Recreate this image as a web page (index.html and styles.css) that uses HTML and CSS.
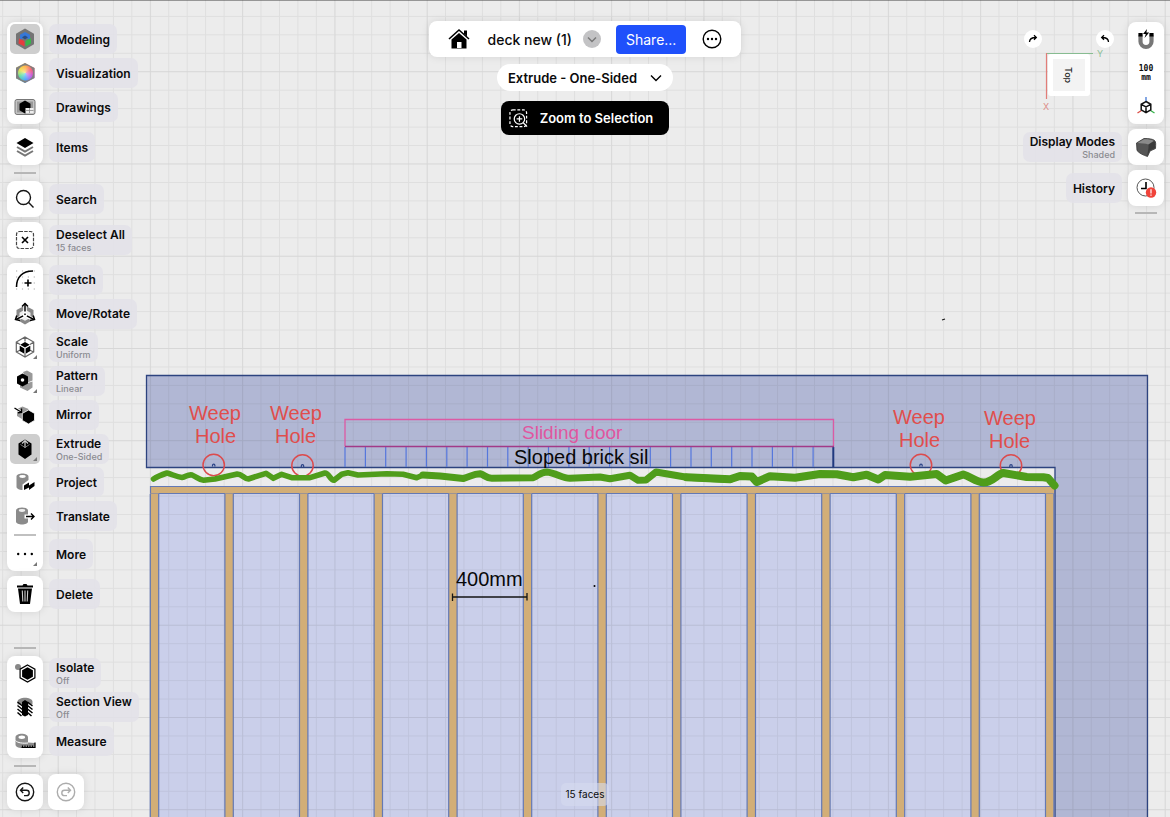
FILE: index.html
```html
<!DOCTYPE html>
<html lang="en">
<head>
<meta charset="utf-8">
<title>deck new (1)</title>
<link rel="stylesheet" href="styles.css">
</head>
<body>
<svg class="canvas" viewBox="0 0 1170 817" preserveAspectRatio="xMidYMid slice" role="img" aria-label="Deck drawing">
  <defs>
    <pattern id="minor" x="2.2" y="15.9" width="18.45" height="18.45" patternUnits="userSpaceOnUse">
      <path d="M0 .5H18.45M.5 0V18.45" class="grid-minor"/>
    </pattern>
    <pattern id="major" x="57.9" y="71.2" width="92.25" height="92.25" patternUnits="userSpaceOnUse">
      <path d="M0 .5H92.25M.5 0V92.25" class="grid-major"/>
    </pattern>
    <g id="post"><path class="post" d="M0 493.5h8.4V820H0z"/><path class="edge" d="M0 494V820M8.4 494V820"/></g>
    <g id="weep"><circle class="weep-ring" r="10.7"/><path class="weep-dot" d="M-1.2 1.6V.4a1.2 1.2 0 0 1 2.4 0v1.2"/></g>
  </defs>
  <path class="wall" d="M146.5 375.5H1147.5V820H1055V467.5H146.5z"/>
  <path class="deck" d="M150.5 486.5H1055V820H150.5z"/>
  <rect width="1170" height="817" fill="url(#minor)"/>
  <rect width="1170" height="817" fill="url(#major)"/>
  <path class="wall-edge" d="M1055 820V467.5H146.5V375.5H1147.5V820"/>
  <path class="post" d="M150.5 486.5H1054V493.5H150.5z"/>
  <path class="edge" d="M150.5 820V486.5H1054M150.5 493.5H1054"/>
  <use href="#post" x="150.3"/><use href="#post" x="224.9"/><use href="#post" x="299.5"/><use href="#post" x="374.1"/><use href="#post" x="448.7"/><use href="#post" x="523.3"/><use href="#post" x="597.9"/><use href="#post" x="672.5"/><use href="#post" x="747.1"/><use href="#post" x="821.7"/><use href="#post" x="896.3"/><use href="#post" x="970.9"/><use href="#post" x="1045.5"/>
  <path class="brick" d="M345 447V467M365.4 447V467M385.7 447V467M406.1 447V467M426.4 447V467M446.8 447V467M467.1 447V467M487.5 447V467M507.8 447V467M528.2 447V467M548.5 447V467M568.9 447V467M589.2 447V467M609.6 447V467M629.9 447V467M650.3 447V467M670.6 447V467M691 447V467M711.3 447V467M731.7 447V467M752 447V467M772.4 447V467M792.7 447V467M813.1 447V467"/>
  <path class="brick-end" d="M833.3 447V467"/>
  <path class="door" d="M345 446.5V419.5H833.5V446.5"/>
  <path class="door-sill" d="M345 446.5H834"/>
  <use href="#weep" x="213.7" y="465"/><use href="#weep" x="302.5" y="465.5"/><use href="#weep" x="921" y="465"/><use href="#weep" x="1011" y="465.5"/>
  <g class="membrane">
    <path stroke-width="5.6" d="M153.5 479C158 476 161 475 167 473C172 474 176 477 182 477.5C186 477 188 474 192 475C197 477 199 480 203.5 480.3L215 479L237.3 474C242 474 244 479 248.3 479L266 473.3L273.3 478.3L281.7 474.3L291.7 477.7H310L325 473C329 473 330 480 334 480.3L341.7 474.3L348 472.7L358 475L386.7 473.7L403 474.3L416.7 477.7L423 475L440 476"/>
    <path stroke-width="7" d="M423 475L440 476L463.3 478.5C470 477 473 473.7 480 473.7C485 475 486 478.3 491.7 478.3L533.3 477.7C539 475 541 472 546.7 472C556 473 563 478.5 570 478.3L600 477L610 478.7L630 475.3L638 480.3L646 480L656 472L686.7 477.3L730 479.5"/>
    <path stroke-width="8" d="M686.7 477.3L730 479.3L740 476L751.7 476.5L756.7 482L770 476.2L795 477.7L820 474L836.7 474.3L853.3 477.3L866.7 474.7L878.3 479.5L885 475L910 476.7L936.7 474L945.7 480.5L963.3 474.5C971 477 976 482 983.3 482.5C992 483 997 474 1003.3 473L1026.7 477L1043.3 477.3L1048 478L1054.5 485.5"/>
  </g>
  <g class="note">
    <g class="note-weep"><text x="189" y="420">Weep</text><text x="195" y="443">Hole</text>
    <text x="270" y="420">Weep</text><text x="275" y="443">Hole</text>
    <text x="893" y="424">Weep</text><text x="899" y="447">Hole</text>
    <text x="984" y="425">Weep</text><text x="989" y="448">Hole</text></g>
    <text class="note-door" x="522" y="439">Sliding door</text>
    <text x="514" y="464">Sloped brick sil</text>
    <text x="456" y="586">400mm</text>
  </g>
  <path class="dim" d="M452.5 597H527M452.5 593.5V601M527 593V600.5"/>
  <circle cx="594.5" cy="586" r="1"/><path class="dim" d="M942 320L945 319"/>
</svg>

<div class="app">
  <nav class="side left" aria-label="Tools">
    <div class="stack">
      <div class="panel">
        <button class="tool"><span class="icon on"><svg viewBox="0 0 24 24"><path fill="#747474" d="M12 1.500l9 5.200v10.600l-9 5.200-9-5.200V6.700z"/><path fill="#3678d8" d="M12 5l5 2.800v5L12 10.500l-5 2.300v-5z"/><path fill="#e53d3e" d="M6 11.500l5.500 2.500v5.500L5.500 16.500z"/><path fill="#37b54a" d="M12.500 14l5.500-3v5.500l-5.500 3z"/><path fill="#284e86" d="M12 8.500l3 1.700-3 2.300-3-2.300z"/></svg></span><span class="label">Modeling</span></button>
        <button class="tool"><span class="icon"><span class="hue"></span></span><span class="label">Visualization</span></button>
        <button class="tool"><span class="icon"><svg viewBox="0 0 24 24"><rect x="2" y="4.500" width="20" height="15" rx="2" fill="#c4c4c4" stroke="#777"/><rect x="4" y="6.500" width="16" height="11" fill="#999"/><path d="M12 5.500l5.500 3.200v6.600L12 18.500l-5.500-3.200V8.700z"/><rect x="12.500" y="13" width="8" height="5" fill="#eee"/><path stroke="#888" stroke-width=".8" d="M12.500 15.500h8M16.500 13v5"/></svg></span><span class="label">Drawings</span></button>
      </div>
      <div class="panel single"><button class="tool"><span class="icon"><svg viewBox="0 0 24 24"><path d="M12 3l8.500 5-8.500 5-8.500-5z"/><path fill="none" stroke="#777" stroke-width="2" d="M4 12l8 4.500 8-4.500M4 16l8 4.500 8-4.500"/></svg></span><span class="label">Items</span></button></div>
      <hr class="handle">
      <div class="panel single"><button class="tool"><span class="icon"><svg viewBox="0 0 24 24"><g class="line"><circle cx="10.500" cy="10.500" r="7"/><path d="M15.600 15.600L20.500 20.500"/></g></svg></span><span class="label">Search</span></button></div>
      <div class="panel single"><button class="tool"><span class="icon"><svg viewBox="0 0 24 24"><rect x="3.500" y="3.500" width="17" height="17" rx="3" fill="none" stroke="#444" stroke-width="1.200" stroke-dasharray="3.500 1.200"/><path stroke="#000" stroke-width="1.600" d="M9 9l6 6M15 9l-6 6"/></svg></span><span class="label">Deselect All<small>15 faces</small></span></button></div>
      <div class="panel">
        <div class="eight">
          <button class="tool"><span class="icon"><svg viewBox="0 0 24 24"><path fill="none" stroke="#aaa" stroke-width="1.200" stroke-dasharray="1.200 4.700" d="M3 3h19M3 9h19M3 15h19M3 21h19"/><path fill="none" stroke="#000" stroke-width="1.600" d="M3.500 19C3.500 9 9.500 3 20 3M15 11.500v7M11.500 15h7"/></svg></span><span class="label">Sketch</span></button>
          <button class="tool"><span class="icon"><svg viewBox="0 0 24 24"><path fill="#888" d="M12 3.500l8.500 4.500v9.500L12 22.500l-8.500-5V8z"/><path fill="#eee" d="M12 7.500l5.500 3.200v5L12 18.800l-5.500-3.100v-5z"/><path fill="none" stroke="#fff" stroke-width="3.500" d="M12 1v12L3 18M12 13l9 5"/><path fill="none" stroke="#000" stroke-width="1.500" stroke-dasharray="8 2" d="M12 1.500V13M3 17.500l9-4.500M21 17.500L12 13"/><path fill="none" stroke="#000" stroke-width="1.500" d="M9 4.500l3-3 3 3M3.800 13.500L2.500 17.500l4.500 1M20.200 13.500l1.300 4-4.500 1"/></svg></span><span class="label">Move/Rotate</span></button>
          <button class="tool"><span class="icon more"><svg viewBox="0 0 24 24"><path fill="none" stroke="#666" stroke-width="1.200" d="M12 2l8.700 5v10L12 22l-8.700-5V7zM3.300 7L7 9.500M20.700 7L17 9.500M12 22v-3.500M12 2v4.500M3.300 17L7 15.300M20.700 17L17 15.300"/><path d="M12 7l4.800 2.700L12 12.500 7.200 9.700zM6.700 10.800l4.700 2.700v5.200l-4.700-2.700zM17.300 10.800l-4.700 2.700v5.200l4.700-2.700z"/></svg></span><span class="label">Scale<small>Uniform</small></span></button>
          <button class="tool"><span class="icon more"><svg viewBox="0 0 24 24"><path fill="#999" d="M10 3l4-1.500 5.500 3v7l-5 2zM14.500 14l5-1.500v6L14.500 22 7 18.500V16l3 1z"/><path d="M9.500 4.500l5.500 3v7l-5.500 3-5.500-3v-7z"/><circle cx="9.500" cy="11" r="1.800" fill="#fff"/></svg></span><span class="label">Pattern<small>Linear</small></span></button>
          <button class="tool"><span class="icon"><svg viewBox="0 0 24 24"><path fill="#999" d="M9.500 3.500l6 2.500v8L9 16l-5-3V6z"/><path stroke="#fff" stroke-width=".8" d="M15.500 7l6 3.400v7L15.500 21l-6.200-3.600v-7z"/><path fill="none" stroke="#fff" stroke-width="3" d="M1.500 5l6.500 4"/><path fill="none" stroke="#000" stroke-width="1.400" d="M1.500 5L8 9M8.500 5.500v3.800L5 9.800"/></svg></span><span class="label">Mirror</span></button>
          <button class="tool"><span class="icon on more"><svg viewBox="0 0 24 24"><path d="M12 2.500l6.500 4v11L12 22l-6.500-4.500v-11z"/><path fill="none" stroke="#cecece" stroke-width="1.200" d="M12 11V3.500M9 6.500l3-3 3 3"/><path fill="none" stroke="#777" d="M7.500 7.500l4.500 3 4.500-3"/></svg></span><span class="label">Extrude<small>One-Sided</small></span></button>
          <button class="tool"><span class="icon"><svg viewBox="0 0 24 24"><path fill="#8b8b8b" d="M3.500 6.500c0-4 12-4 12 0V10l-6 4.500V20c-3.500 0-6-1.500-6-3z"/><ellipse cx="9.500" cy="6.500" rx="3.200" ry="1.400" fill="#fff"/><path d="M11 15.500l5-3v3l5.500-3.500v4L16 20v-2.500L11 20z"/></svg></span><span class="label">Project</span></button>
          <button class="tool"><span class="icon"><svg viewBox="0 0 24 24"><path fill="#8b8b8b" d="M3 6.500c0-4 12-4 12 0v11c0 4-12 4-12 0z"/><ellipse cx="9" cy="6.500" rx="3.200" ry="1.400" fill="#eee"/><path stroke="#fff" stroke-width="4" d="M11.500 12.500h10"/><path fill="none" stroke="#000" stroke-width="1.400" d="M13 12.500h8M18 9.500l3 3-3 3"/></svg></span><span class="label">Translate</span></button>
        </div>
        <hr class="rule">
        <button class="tool"><span class="icon more"><svg viewBox="0 0 24 24"><circle cx="5.200" cy="12" r="1.200"/><circle cx="12" cy="12" r="1.200"/><circle cx="18.800" cy="12" r="1.200"/></svg></span><span class="label">More</span></button>
      </div>
      <div class="panel single"><button class="tool"><span class="icon"><svg viewBox="0 0 24 24"><path d="M4 3.500h5.500l1-1.500h3l1 1.500H20v2H4zM5 6.500h14L17 22H7z"/><path stroke="#ccc" stroke-width="1.100" d="M9.300 8.500l.5 11M12 8.500v11M14.700 8.500l-.5 11"/></svg></span><span class="label">Delete</span></button></div>
    </div>
    <div class="stack">
      <hr class="handle">
      <div class="panel">
        <button class="tool"><span class="icon"><svg viewBox="0 0 24 24"><circle cx="5" cy="6" r="3" fill="#888"/><path fill="#fff" stroke="#000" stroke-width="1.200" d="M14.500 4l7.400 4.200v8.600L14.500 21l-7.400-4.200V8.200z"/><path d="M14.500 6.300l5.400 3v6.400l-5.400 3-5.400-3V9.300z"/></svg></span><span class="label">Isolate<small>Off</small></span></button>
        <button class="tool"><span class="icon"><svg viewBox="0 0 24 24"><path fill="#888" d="M4.500 6.500c1-5 14-5 15 0v3h-15z"/><path d="M9 7l3-2 3 2v13l-3 1.500L9 20z"/><path fill="none" stroke="#000" stroke-width="1.500" d="M4.500 7l5 4M4.500 10.500l5 4M4.500 14l5 4M4.500 17.500l4 3.500M14.500 7l5 4M14.500 10.500l5 4M14.500 14l5 4M14.500 17.500l4 3.500"/></svg></span><span class="label">Section View<small>Off</small></span></button>
        <button class="tool"><span class="icon"><svg viewBox="0 0 24 24"><path fill="#8b8b8b" d="M2.500 8.500c0-5 12.500-5 12.500 0v5l7 .5v5H9c-4 0-6.500-1.500-6.500-3.500z"/><ellipse cx="8.800" cy="8.200" rx="3.300" ry="1.700" fill="#fff"/><path fill="none" stroke="#fff" d="M2.500 11.500c2 2.500 7.500 3 12.500 2.500"/><path stroke="#000" stroke-width="1.200" d="M9.500 16.500v2M12 16.500v2M14.500 16.500v2M17 16.500v2M19.500 16.500v2M22 13.500V19M8.500 18.500H22"/></svg></span><span class="label">Measure</span></button>
      </div>
      <hr class="handle">
      <div class="history">
        <div class="panel single"><button class="tool" aria-label="Undo"><span class="icon"><svg viewBox="0 0 24 24"><g class="line"><circle cx="12" cy="12" r="8.700"/><path d="M10.200 7.500l-2.700 2.700 2.700 2.700M7.500 10.200h6a2.700 2.700 0 0 1 0 5.400H11"/></g></svg></span></button></div>
        <div class="panel single"><button class="tool faded" aria-label="Redo"><span class="icon"><svg viewBox="0 0 24 24"><g class="line"><circle cx="12" cy="12" r="8.700"/><path d="M13.800 7.500l2.700 2.700-2.700 2.700M16.500 10.200h-6a2.700 2.700 0 0 0 0 5.400H13"/></g></svg></span></button></div>
      </div>
    </div>
  </nav>

  <main class="center">
    <div class="stack middle">
      <header class="titlebar">
        <button class="plain" aria-label="Home"><svg viewBox="0 0 24 24"><path d="M17 3.500h3V9.500l-3-3z"/><path fill="none" stroke="#000" stroke-width="1.600" d="M2 12L12 3l10 9"/><path d="M12 6l7.500 6.500V21.500h-15v-9z"/><path fill="#fff" d="M10 15h4.500v6H10z"/></svg></button>
        <span class="title">deck new (1)</span>
        <button class="dropdown" aria-label="Document menu"><svg viewBox="0 0 18 18"><path fill="none" stroke="#777" stroke-width="1.400" d="M5 7.500l4 4 4-4"/></svg></button>
        <button class="share">Share...</button>
        <button class="plain" aria-label="Options"><svg viewBox="0 0 24 24"><circle cx="12" cy="12" r="8.800" fill="none" stroke="#000" stroke-width="1.400"/><circle cx="8" cy="12" r="1.200"/><circle cx="12" cy="12" r="1.200"/><circle cx="16" cy="12" r="1.200"/></svg></button>
      </header>
      <button class="pill">Extrude - One-Sided<svg viewBox="0 0 12 12"><path fill="none" stroke="#000" stroke-width="1.400" d="M1 3.500l5 5 5-5"/></svg></button>
      <button class="zoom"><svg viewBox="0 0 20 20"><g fill="none" stroke="#fff" stroke-width="1.300"><rect x="1" y="1" width="17.500" height="17.500" rx="3" stroke-dasharray="3 1.800"/><circle cx="11" cy="10.500" r="5.500" fill="#000"/><path d="M15 14.500l4 4M11 7.500v6M8 10.500h6"/></g></svg>Zoom to Selection</button>
    </div>
    <output class="status">15 faces</output>
  </main>

  <aside class="view">
    <div class="viewcube">
      <div class="turns">
        <button class="turn" aria-label="Turn right"><svg viewBox="0 0 18 18"><path fill="none" stroke="#000" stroke-width="1.300" d="M5.500 12c0-3.500 2-4.500 6.500-4.500M10 5.300l2.300 2.200L10 9.700"/></svg></button>
        <button class="turn" aria-label="Turn left"><svg viewBox="0 0 18 18"><path fill="none" stroke="#000" stroke-width="1.300" d="M12.500 12c0-3.500-2-4.500-6.500-4.500M8 5.300L5.700 7.500 8 9.700"/></svg></button>
      </div>
      <svg class="cube" viewBox="0 0 90 66"><rect fill="#fff" x="24" y="8" width="42" height="42" rx="3"/><path fill="#f3f3f3" d="M29 13h32v32H29z"/><path stroke="#87bc91" stroke-width="1.200" d="M22 7.500h47"/><path stroke="#e27d78" stroke-width="1.200" d="M22.500 7v46"/><text class="axis-y" x="73" y="11">Y</text><text class="axis-x" x="19" y="64">X</text><text class="face" transform="translate(41 21) rotate(90)">Top</text></svg>
    </div>
    <div class="side right">
      <div class="panel">
        <button class="tool" aria-label="Snapping"><span class="icon"><svg viewBox="0 0 24 24"><path fill="none" stroke="#777" stroke-width="4.200" d="M6.500 8.500v6a5.500 5.500 0 0 0 11 0v-6"/><path d="M4.400 6H8.600v3.500H4.400zM15.400 6h4.200v3.500h-4.200zM13 2L9 7h2.800l-1.300 4 4.700-5.500h-2.800z"/></svg></span></button>
        <button class="tool units">100<br>mm</button>
        <button class="tool" aria-label="Axes"><span class="icon"><svg viewBox="0 0 24 24"><path stroke="#4278d5" stroke-width="1.300" d="M12 2v5"/><path stroke="#db4d45" stroke-width="1.300" d="M3.500 18l4-2.500"/><path stroke="#35b34a" stroke-width="1.300" d="M20.500 18l-4-2.500"/><path fill="#fff" stroke="#111" stroke-width="1.500" d="M12 6.500l4.800 2.800v5.600L12 17.700l-4.800-2.800V9.300zM7.200 9.300L12 12l4.800-2.700M12 12v5.700"/></svg></span></button>
      </div>
      <div class="panel single"><button class="tool"><span class="icon"><svg viewBox="0 0 24 24"><path fill="#555" stroke="#333" stroke-width=".8" d="M2.500 8L10 3.500c5 0 8.500.5 10.300 1.800s1.400 3.700 1.200 8.200L16 16l-2.500 5.500C9 20 5.500 18.500 3 15.500z"/><path fill="#8a8a8a" d="M3.500 8L10 4.200c5 0 8 .5 9.800 1.600L14.500 9.500C11 8.500 7.500 8.100 3.500 8z"/><path fill="#3a3a3a" d="M14.500 9.500l6-3.500c.9 2 .7 4 .6 7L15.700 15.500 13.300 21c.3-4 1.700-8 1.200-11.500z"/></svg></span><span class="label">Display Modes<small>Shaded</small></span></button></div>
      <div class="panel single"><button class="tool"><span class="icon"><svg viewBox="0 0 24 24"><circle cx="11.500" cy="11.500" r="8.500" fill="none" stroke="#555"/><path fill="none" stroke="#000" stroke-width="1.600" d="M12 6v6.500H7"/><circle cx="17" cy="16.500" r="5.200" fill="#f0433a"/><path stroke="#fff" stroke-width="1.200" d="M17 13.200v4.300M17 18.500v1.300"/></svg></span><span class="label">History</span></button></div>
      <hr class="handle">
    </div>
  </aside>
</div>
</body>
</html>
```
FILE: styles.css
```css
* { box-sizing: border-box; }
body { margin: 0; min-height: 100vh; background: #ececec; border-top: 1px solid #969696; font-family: Inter, "Liberation Sans", sans-serif; color: #0b0b0c; overflow: hidden; }
button { font: inherit; color: inherit; background: none; border: 0; padding: 0; cursor: pointer; }
svg { display: block; }

.canvas { position: absolute; inset: 0; width: 100%; height: 100%; }
.grid-minor { stroke: rgba(60, 60, 60, .08); fill: none; }
.grid-major { stroke: rgba(60, 60, 60, .05); fill: none; }
.wall { fill: #b1b7d4; }
.wall-edge { fill: none; stroke: #2d437f; stroke-width: 1.3; }
.deck { fill: #cacfea; }
.post { fill: #d2ae77; }
.edge { fill: none; stroke: #6479b4; stroke-width: 1.2; }
.brick { stroke: #5577dc; stroke-width: 1.2; }
.brick-end { stroke: #20397f; stroke-width: 2; }
.door { fill: none; stroke: #dc5aa4; stroke-width: 1.3; }
.door-sill { stroke: #a23a88; stroke-width: 1.6; }
.weep-ring { fill: none; stroke: #dc4b4d; stroke-width: 1.5; }
.weep-dot { fill: none; stroke: #2b4487; stroke-width: 1.2; }
.membrane { fill: none; stroke: #4f9d1b; stroke-linecap: round; stroke-linejoin: round; }
.note { font: 20px "Liberation Sans", Arial, sans-serif; fill: #080808; }
.note-weep { fill: #e04e4c; }
.note-door { fill: #e0569f; font-size: 19px; }
.dim { stroke: #151515; stroke-width: 1.3; fill: none; }

.app { position: relative; display: flex; justify-content: space-between; min-height: calc(100vh - 1px); padding: 21px 6px 7px 7px; pointer-events: none; }
.app button { pointer-events: auto; }
.side { display: flex; flex-direction: column; width: 36px; }
.left { justify-content: space-between; }
.stack { display: flex; flex-direction: column; gap: 5px; }
.right { gap: 5px; }
.panel { width: 36px; background: #fff; border-radius: 8px; box-shadow: 0 0 8px rgba(0, 0, 0, .1); }
.single { padding: 1px 0; }
.tool { display: flex; align-items: center; width: 36px; height: 34px; gap: 9px; }
.eight { display: grid; grid-template-rows: repeat(8, 1fr); height: 270px; }
.eight .tool { height: auto; }
.right .tool { flex-direction: row-reverse; }
.icon { position: relative; flex: none; width: 30px; height: 30px; margin-left: 3px; display: grid; place-items: center; border-radius: 5px; }
.right .icon { margin: 0 3px 0 0; }
.icon svg { width: 24px; height: 24px; }
.on { background: #cecece; }
.more::after { content: ""; position: absolute; right: 3px; bottom: 3px; border: 2px solid; border-color: transparent #777 #777 transparent; }
.faded { opacity: .35; }
.line { fill: none; stroke: #151515; stroke-width: 1.4; }
.hue { width: 19px; height: 20px; clip-path: polygon(50% 0, 100% 25%, 100% 75%, 50% 100%, 0 75%, 0 25%); background: radial-gradient(circle, rgba(255, 255, 255, .5), transparent 7px, #808080 8px), conic-gradient(#ffb04a, #f35f79, #c25be8, #4ba6ff, #5fe0a4, #efdf4e, #ffb04a); }
.label { flex: none; height: 30px; padding: 0 7px; display: flex; flex-direction: column; justify-content: center; border-radius: 7px; background: rgba(227, 226, 233, .85); font-size: 12px; line-height: 15px; font-weight: 600; text-align: left; white-space: nowrap; }
.label small { font-size: 9px; line-height: 11px; font-weight: 500; color: #8b8b91; }
.right .label { text-align: right; }
.handle { width: 22px; height: 2px; margin: 2px auto; border: 0; background: #b7b7b7; }
.right .handle { margin: 1px auto; }
.rule { width: 22px; height: 2px; margin: 1px auto; border: 0; background: #c0c0c0; }
.history { display: flex; gap: 5px; }

.center { position: absolute; inset: 20px 0 11px; display: flex; flex-direction: column; align-items: center; justify-content: space-between; }
.middle { align-items: center; gap: 0; }
.titlebar { display: flex; align-items: center; height: 36px; padding: 0 17px 0 18px; background: #fff; border-radius: 8px; box-shadow: 0 0 8px rgba(0, 0, 0, .1); }
.plain svg { width: 24px; height: 24px; }
.title { margin-left: 17px; font-size: 14px; font-weight: 500; }
.dropdown { margin: 0 15px 0 11px; width: 18px; height: 18px; border-radius: 50%; }
.app .dropdown { background: #c3c3c5; }
.share { height: 29px; padding: 0 10px; margin-right: 14px; border-radius: 4px; font-size: 14px; }
.app .share { background: #1f50fb; color: #fff; }
.pill { display: flex; align-items: center; gap: 13px; height: 27px; margin: 7px 0 10px; padding: 0 11px; border-radius: 14px; font-size: 13px; font-weight: 600; }
.app .pill { background: #fff; }
.pill svg { width: 12px; height: 12px; }
.zoom { display: flex; align-items: center; gap: 12px; height: 34px; padding: 0 16px 0 8px; border-radius: 8px; font-size: 13px; font-weight: 600; }
.app .zoom { background: #000; color: #fff; }
.zoom svg { width: 19px; height: 19px; }
.status { padding: 4px 5px; border-radius: 5px; background: rgba(214, 218, 238, .6); font-size: 10px; line-height: 15px; }

.view { display: flex; gap: 14px; align-items: flex-start; }
.viewcube { width: 90px; padding-top: 8px; }
.turns { display: flex; justify-content: space-between; }
.turn { width: 18px; height: 18px; border-radius: 50%; }
.app .turn { background: #fff; }
.turn svg { width: 18px; height: 18px; }
.cube { width: 90px; height: 66px; margin-top: -2px; }
.axis-y, .axis-x { font-size: 9px; }
.axis-y { fill: #8fbf97; }
.axis-x { fill: #dd8c88; }
.face { font-size: 9px; font-weight: 500; fill: #222; }
.app .units { display: block; font: bold 8px/9px "DejaVu Sans Mono", monospace; text-align: center; }
```
